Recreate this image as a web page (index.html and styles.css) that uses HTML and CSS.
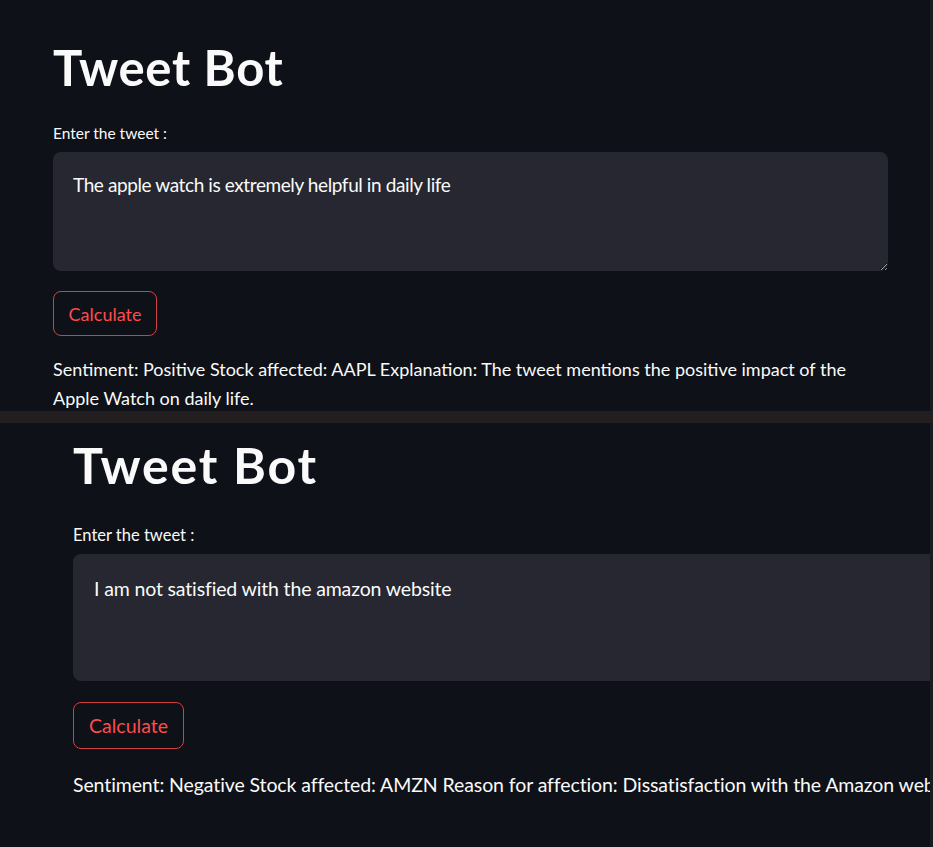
FILE: index.html
```html
<!DOCTYPE html>
<html lang="en">
<head>
<meta charset="utf-8">
<title>Tweet Bot</title>
<link rel="stylesheet" href="styles.css">
</head>
<body>
<div class="shot shot-top">
  <main class="app app-top">
    <h1 class="title">Tweet Bot</h1>
    <label class="label" for="tweet1">Enter the tweet :</label>
    <textarea id="tweet1" class="tweet" readonly>The apple watch is extremely helpful in daily life</textarea>
    <button class="calc" type="button">Calculate</button>
    <p class="result">Sentiment: Positive Stock affected: AAPL Explanation: The tweet mentions the positive impact of the Apple Watch on daily life.</p>
  </main>
  <div class="edge"></div>
</div>
<div class="divider"></div>
<div class="shot shot-bottom">
  <main class="app app-bottom">
    <h1 class="title">Tweet Bot</h1>
    <label class="label" for="tweet2">Enter the tweet :</label>
    <textarea id="tweet2" class="tweet" readonly>I am not satisfied with the amazon website</textarea>
    <button class="calc" type="button">Calculate</button>
    <p class="result">Sentiment: Negative Stock affected: AMZN Reason for affection: Dissatisfaction with the Amazon website.</p>
  </main>
  <div class="edge"></div>
</div>
</body>
</html>
```

FILE: styles.css
```css
* { box-sizing: border-box; }

html, body {
  margin: 0;
  padding: 0;
  background: #0e1117;
  color-scheme: dark;
}

body {
  width: 933px;
  height: 847px;
  overflow: hidden;
  display: flex;
  flex-direction: column;
  font-family: Lato, "Noto Sans", sans-serif;
  color: #fafafa;
}

.shot {
  display: flex;
  overflow: hidden;
  background: #0e1117;
}

.shot-top { height: 411px; }
.shot-bottom { height: 424px; }

.divider {
  height: 12px;
  background: #231f20;
}

.edge {
  width: 3px;
  flex: none;
  background: #1b1c21;
}

.app {
  flex: 1;
  min-width: 0;
  display: flex;
  flex-direction: column;
  align-items: flex-start;
  overflow: hidden;
}

.title {
  margin: 0;
  font-weight: 700;
  color: #fafafa;
  white-space: nowrap;
}

.label {
  display: block;
  color: #fafafa;
  white-space: nowrap;
}

.tweet {
  display: block;
  border: none;
  outline: none;
  border-radius: 8px;
  background: #262730;
  color: #fafafa;
  font-family: inherit;
  overflow: hidden;
  flex: none;
}

.calc {
  display: flex;
  align-items: center;
  justify-content: center;
  background: transparent;
  border: 1px solid #d2413f;
  border-radius: 8px;
  color: #ff4b4b;
  font-family: inherit;
  padding: 0;
  flex: none;
}

.result {
  margin: 0;
  color: #fafafa;
}

/* ---------- top screenshot ---------- */
.app-top { padding: 37px 0 0 53px; }

.app-top .title {
  font-size: 49px;
  line-height: 60px;
  letter-spacing: 0.7px;
}

.app-top .label {
  margin-top: 26px;
  font-size: 15.5px;
  line-height: 20px;
}

.app-top .tweet {
  margin-top: 9px;
  width: 835px;
  height: 119px;
  padding: 18px 20px;
  font-size: 19px;
  line-height: 30px;
  letter-spacing: -0.4px;
  resize: vertical;
}

.app-top .calc {
  margin-top: 20px;
  width: 104px;
  height: 45px;
  font-size: 18px;
}

.app-top .result {
  margin-top: 19px;
  width: 835px;
  font-size: 18px;
  line-height: 28.5px;
  letter-spacing: 0;
}

/* ---------- bottom screenshot ---------- */
.app-bottom { padding: 12px 0 0 73px; }

.app-bottom .title {
  font-size: 50px;
  line-height: 60px;
  letter-spacing: 1.8px;
}

.app-bottom .label {
  margin-top: 30px;
  font-size: 16.5px;
  line-height: 20px;
}

.app-bottom .tweet {
  margin-top: 9px;
  width: 900px;
  height: 127px;
  padding: 19px 21px;
  font-size: 19.5px;
  line-height: 32px;
  letter-spacing: -0.15px;
  resize: none;
}

.app-bottom .calc {
  margin-top: 21px;
  width: 111px;
  height: 47px;
  font-size: 19.5px;
}

.app-bottom .result {
  margin-top: 20px;
  font-size: 19.5px;
  line-height: 32px;
  letter-spacing: -0.1px;
  white-space: nowrap;
}
```
